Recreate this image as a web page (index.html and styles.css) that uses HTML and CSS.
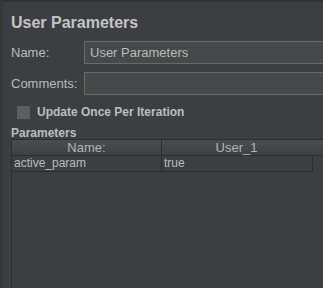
FILE: index.html
```html
<!DOCTYPE html>
<html lang="en">
<head>
    <meta charset="UTF-8">
    <title>User Parameters</title>
    <link rel="stylesheet" href="styles.css">
</head>
<body>
    <div class="panel">
        <h1 class="title">User Parameters</h1>

        <div class="row">
            <label class="label">Name:</label>
            <div class="field">User Parameters</div>
        </div>
        <div class="row">
            <label class="label">Comments:</label>
            <div class="field"></div>
        </div>

        <div class="check-row">
            <span class="checkbox"></span>
            <span class="check-label">Update Once Per Iteration</span>
        </div>

        <div class="section">Parameters</div>
        <div class="scroll">
            <div class="thead">
                <div class="th col-name">Name:</div>
                <div class="th col-user">User_1</div>
            </div>
            <div class="tr">
                <div class="td col-name">active_param</div>
                <div class="td col-user">true</div>
            </div>
        </div>
    </div>
</body>
</html>
```

FILE: styles.css
```css
html, body {
    height: 100%;
}

body {
    margin: 0;
    background: #3c3f41;
    font-family: "Liberation Sans", Arial, sans-serif;
    font-size: 12px;
    color: #bbbbbb;
    overflow: hidden;
}

.panel {
    height: 100%;
    box-sizing: border-box;
    border-top: 2px solid #2f3133;
    border-left: 3px solid #353739;
    padding-left: 8px;
    display: flex;
    flex-direction: column;
}

.title {
    margin: 11px 0 0 0;
    font-size: 16px;
    line-height: 20px;
    font-weight: bold;
    color: #c4c4c4;
}

.row {
    display: flex;
    align-items: center;
    margin-top: 8px;
}

.label {
    width: 73px;
    flex: none;
    font-size: 13px;
}

/* field runs off the right edge, so no right border */
.field {
    flex: 1;
    height: 21px;
    line-height: 21px;
    border: 1px solid #686b6d;
    border-right: 0;
    background: #45494a;
    padding-left: 5px;
    font-size: 13px;
    color: #bbbbbb;
}

.check-row {
    display: flex;
    align-items: center;
    margin-top: 10px;
    padding-left: 6px;
}

.checkbox {
    width: 13px;
    height: 13px;
    background: #5c5f61;
    margin-right: 7px;
}

.check-label {
    font-size: 12px;
    font-weight: bold;
    color: #bdbdbd;
}

.section {
    margin-top: 8px;
    font-size: 12px;
    font-weight: bold;
    color: #bdbdbd;
    line-height: 12px;
}

.scroll {
    flex: 1;
    border-left: 1px solid #2b2d2e;
    border-top: 1px solid #2b2d2e;
}

.thead {
    display: flex;
    height: 15px;
    background: linear-gradient(#4a4d50, #3e4143);
    border-bottom: 1px solid #2b2d2e;
}

.th {
    text-align: center;
    font-size: 13px;
    line-height: 15px;
    color: #b4b4b4;
}

.col-name {
    width: 149px;
    flex: none;
    border-right: 1px solid #2b2d2e;
}

.th.col-user {
    flex: none;
    width: 149px;
}

.tr {
    display: flex;
    width: 300px;
    height: 15px;
    border-bottom: 1px solid #2b2d2e;
    border-right: 1px solid #2b2d2e;
}

.td {
    font-size: 12px;
    line-height: 15px;
    padding-left: 2px;
    color: #bbbbbb;
}

.td.col-name {
    width: 147px;
}
```
